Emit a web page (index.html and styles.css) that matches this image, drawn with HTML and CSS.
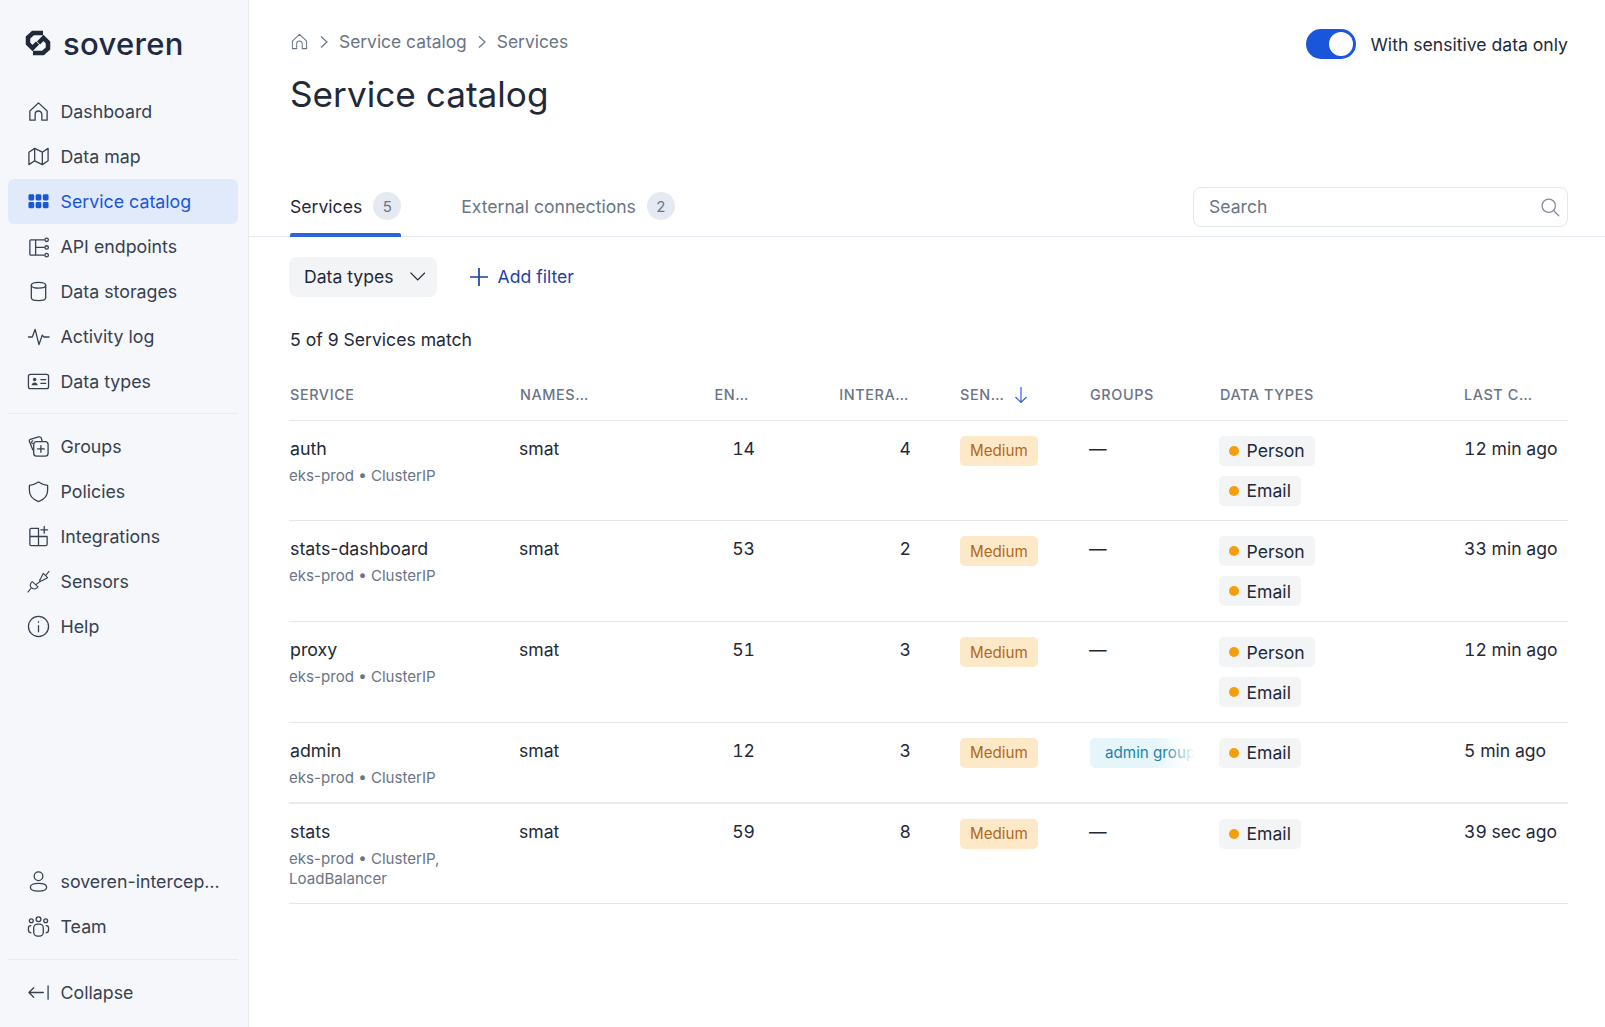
FILE: index.html
```html
<!DOCTYPE html>
<html lang="en">
<head>
<meta charset="utf-8">
<title>Service catalog</title>
<link rel="stylesheet" href="styles.css">
</head>
<body>
<div class="app">
  <aside class="sidebar">
    <div class="logo">
      <svg class="logo-mark" viewBox="0 0 26 26" width="26" height="26"><path d="M18 3H8L3 7.500V13.500L7.500 18 12.500 13" /><path d="M8 23H18L23 18.500V12.500L18.500 8 13.500 13"/></svg>
      <span class="logo-text">soveren</span>
    </div>
    <nav class="nav-group">
      <a class="nav-item"><svg class="ico" viewBox="0 0 24 24"><path d="M3 11.500 12 3l9 8.500V21h-5.500v-6a3.500 3.500 0 0 0-7 0v6H3z"/></svg>Dashboard</a>
      <a class="nav-item"><svg class="ico" viewBox="0 0 24 24"><path d="M2 7.500 8 3.500l8 4 6-4v13l-6 4-8-4-6 4zM8 3.500v13M16 7.500v13"/></svg>Data map</a>
      <a class="nav-item active"><svg class="ico ico-fill" viewBox="0 0 24 24"><rect x="1.500" y="4.500" width="6" height="6.500" rx="1.500"/><rect x="9" y="4.500" width="6" height="6.500" rx="1.500"/><rect x="16.500" y="4.500" width="6" height="6.500" rx="1.500"/><rect x="1.500" y="12.500" width="6" height="6.500" rx="1.500"/><rect x="9" y="12.500" width="6" height="6.500" rx="1.500"/><rect x="16.500" y="12.500" width="6" height="6.500" rx="1.500"/></svg>Service catalog</a>
      <a class="nav-item"><svg class="ico" viewBox="0 0 24 24"><path d="M18 5H4a1 1 0 0 0-1 1V20a1 1 0 0 0 1 1h14M9 5V21M9 13h9"/><circle cx="20.500" cy="5" r="1.800"/><circle cx="20.500" cy="13" r="1.800"/><circle cx="20.500" cy="21" r="1.800"/></svg>API endpoints</a>
      <a class="nav-item"><svg class="ico" viewBox="0 0 24 24"><ellipse cx="12" cy="5.500" rx="7.500" ry="3"/><path d="M4.500 5.500v13c0 1.700 3.400 3 7.500 3s7.500-1.300 7.500-3v-13"/></svg>Data storages</a>
      <a class="nav-item"><svg class="ico" viewBox="0 0 24 24"><path d="M1.500 12.500h4l3-8 4 16 3.500-10 1.500 2h5.500"/></svg>Activity log</a>
      <a class="nav-item"><svg class="ico" viewBox="0 0 24 24"><rect x="1.500" y="4.500" width="21" height="15" rx="2"/><circle cx="8" cy="10" r="1.800" class="dot"/><path d="M4.800 16c.3-2 1.500-3 3.200-3s2.900 1 3.200 3z" class="dot"/><path d="M14.500 10h5M14.500 14h5"/></svg>Data types</a>
    </nav>
    <div class="rule"></div>
    <nav class="nav-group">
      <a class="nav-item"><svg class="ico" viewBox="0 0 24 24"><path d="M6 15.500 2.500 6.500a1.500 1.500 0 0 1 1-2L12 2c1.500-.4 2.500.3 3 1.500l.7 2.500"/><path d="M5.500 9 5 8a1.500 1.500 0 0 1 1-2"/><rect x="7" y="7" width="15" height="15" rx="3"/><path d="M14.500 11v7M11 14.500h7"/></svg>Groups</a>
      <a class="nav-item"><svg class="ico" viewBox="0 0 24 24"><path d="M12 2c3 2 6 3 9.500 3.500V11c0 5.500-4 9.500-9.500 11.500C6.500 20.500 2.500 16.500 2.500 11V5.500C6 5 9 4 12 2z"/></svg>Policies</a>
      <a class="nav-item"><svg class="ico" viewBox="0 0 24 24"><path d="M3 12V5a1.500 1.500 0 0 1 1.500-1.500H12V12M3 12v8a1.500 1.500 0 0 0 1.500 1.500h15a1.500 1.500 0 0 0 1.500-1.500v-8H3M12 12v9.500M18 1.500v7M14.500 5h7"/></svg>Integrations</a>
      <a class="nav-item"><svg class="ico ico-thin" viewBox="0 0 24 24"><path d="M1 23l3.500-4.500M4.500 18.500a4.200 4.200 0 0 1 .2-5.500l.8-.8 6 5.500-.8.800a4.200 4.200 0 0 1-6.200 0zM9.500 15l5-3.500M13.500 10.500 17 3.500l4.500 4.500-6.500 3.500a1.500 1.500 0 0 1-2-1zM20 5l3-3.500"/></svg>Sensors</a>
      <a class="nav-item"><svg class="ico" viewBox="0 0 24 24"><circle cx="12" cy="12" r="10.500"/><path d="M12 11v6.500M12 7v.5"/></svg>Help</a>
    </nav>
    <div class="spacer"></div>
    <nav class="nav-group nav-lower">
      <a class="nav-item"><svg class="ico" viewBox="0 0 24 24"><circle cx="12" cy="6.500" r="4.500"/><path d="M12 14c-5 0-8.500 1.500-8.500 4s3.500 4 8.500 4 8.500-1.500 8.500-4-3.500-4-8.500-4z"/></svg>soveren-intercep…</a>
      <a class="nav-item"><svg class="ico" viewBox="0 0 24 24"><circle cx="12" cy="4.500" r="2.500"/><circle cx="4.500" cy="6" r="2"/><circle cx="19.500" cy="6" r="2"/><rect x="7" y="9.500" width="10" height="12.500" rx="4"/><path d="M4 11c-2 0-2.500 1-2.500 2.500v2c0 1.500.5 3 2.500 3M20 11c2 0 2.500 1 2.500 2.500v2c0 1.500-.5 3-2.500 3"/></svg>Team</a>
    </nav>
    <div class="rule"></div>
    <nav class="nav-group nav-last">
      <a class="nav-item"><svg class="ico" viewBox="0 0 24 24"><path d="M17 12H2M7 7l-5 5 5 5M22 5v14"/></svg>Collapse</a>
    </nav>
  </aside>

  <main class="main">
    <header class="page-head">
      <div>
        <div class="crumbs">
          <svg class="crumb-home" viewBox="0 0 24 24"><path d="M3 11.500 12 3l9 8.500V21h-5.500v-6a3.500 3.500 0 0 0-7 0v6H3z"/></svg>
          <svg class="crumb-sep" viewBox="0 0 10 14"><path d="m2 1.500 6 5.500-6 5.500"/></svg>
          <span>Service catalog</span>
          <svg class="crumb-sep" viewBox="0 0 10 14"><path d="m2 1.500 6 5.500-6 5.500"/></svg>
          <span>Services</span>
        </div>
        <h1 class="title">Service catalog</h1>
      </div>
      <div class="switch-wrap">
        <span class="switch"><span class="knob"></span></span>
        <span class="switch-label">With sensitive data only</span>
      </div>
    </header>

    <div class="tabbar">
      <a class="tab tab-on">Services <span class="count">5</span></a>
      <a class="tab">External connections <span class="count">2</span></a>
      <div class="search">
        <span>Search</span>
        <svg class="search-ico" viewBox="0 0 24 24"><circle cx="10.500" cy="10.500" r="8"/><path d="m16.500 16.500 6 6"/></svg>
      </div>
    </div>

    <div class="filters">
      <button class="select">Data types <svg class="chev" viewBox="0 0 16 9"><path d="m.5.500 7.500 7.500 7.500-7.500"/></svg></button>
      <button class="add"><svg class="plus" viewBox="0 0 20 20"><path d="M10 1v18M1 10h18"/></svg>Add filter</button>
    </div>

    <p class="match">5 of 9 Services match</p>

    <table class="grid">
      <colgroup>
        <col class="c-service"><col class="c-ns"><col class="c-en"><col class="c-int"><col class="c-sen"><col class="c-grp"><col class="c-dt"><col class="c-last">
      </colgroup>
      <thead>
        <tr>
          <th>SERVICE</th>
          <th>NAMES…</th>
          <th class="num th-en">EN…</th>
          <th class="num th-int">INTERA…</th>
          <th class="th-sen">SEN… <svg class="sort" viewBox="0 0 14 18"><path d="M7 1v15.500M1.500 11 7 16.500l5.500-5.500"/></svg></th>
          <th>GROUPS</th>
          <th>DATA TYPES</th>
          <th class="th-last">LAST C…</th>
        </tr>
      </thead>
      <tbody>
        <tr>
          <td><div class="name">auth</div><div class="sub">eks-prod • ClusterIP</div></td>
          <td class="plain">smat</td><td class="plain num">14</td><td class="plain num int">4</td>
          <td><span class="badge">Medium</span></td>
          <td class="plain">—</td>
          <td><span class="chip"><i></i>Person</span><span class="chip"><i></i>Email</span></td>
          <td class="plain last">12 min ago</td>
        </tr>
        <tr>
          <td><div class="name">stats-dashboard</div><div class="sub">eks-prod • ClusterIP</div></td>
          <td class="plain">smat</td><td class="plain num">53</td><td class="plain num int">2</td>
          <td><span class="badge">Medium</span></td>
          <td class="plain">—</td>
          <td><span class="chip"><i></i>Person</span><span class="chip"><i></i>Email</span></td>
          <td class="plain last">33 min ago</td>
        </tr>
        <tr>
          <td><div class="name">proxy</div><div class="sub">eks-prod • ClusterIP</div></td>
          <td class="plain">smat</td><td class="plain num">51</td><td class="plain num int">3</td>
          <td><span class="badge">Medium</span></td>
          <td class="plain">—</td>
          <td><span class="chip"><i></i>Person</span><span class="chip"><i></i>Email</span></td>
          <td class="plain last">12 min ago</td>
        </tr>
        <tr class="row-admin">
          <td><div class="name">admin</div><div class="sub">eks-prod • ClusterIP</div></td>
          <td class="plain">smat</td><td class="plain num">12</td><td class="plain num int">3</td>
          <td><span class="badge">Medium</span></td>
          <td><span class="group">admin group</span></td>
          <td><span class="chip"><i></i>Email</span></td>
          <td class="plain last">5 min ago</td>
        </tr>
        <tr class="row-final">
          <td><div class="name">stats</div><div class="sub">eks-prod • ClusterIP, LoadBalancer</div></td>
          <td class="plain">smat</td><td class="plain num">59</td><td class="plain num int">8</td>
          <td><span class="badge">Medium</span></td>
          <td class="plain">—</td>
          <td><span class="chip"><i></i>Email</span></td>
          <td class="plain last">39 sec ago</td>
        </tr>
      </tbody>
    </table>
  </main>
</div>
</body>
</html>
```
FILE: styles.css
```css
* { box-sizing: border-box; }
html, body { margin: 0; }
body { font-family: Inter, "Liberation Sans", sans-serif; color: #1f2937; background: #fff; font-size: 17.6px; overflow: hidden; }
.app { display: flex; height: 1027px; overflow: hidden; }

.sidebar { width: 249px; flex: none; background: #f5f7fa; border-right: 1px solid #e8ecf2; display: flex; flex-direction: column; padding: 0 10px 0 8px; }
.logo { display: flex; align-items: center; gap: 12px; height: 89px; padding: 0 0 3px 17px; }
.logo-mark { flex: none; fill: none; stroke: #1f2937; stroke-width: 4.500; stroke-linejoin: miter; }
.logo-text { font-size: 31px; font-weight: 500; line-height: 1; letter-spacing: .3px; color: #1f2a44; }
.nav-group { display: flex; flex-direction: column; }
.nav-lower { padding-bottom: 1px; }
.nav-item { display: flex; align-items: center; height: 45px; border-radius: 6px; padding-left: 19px; gap: 10.500px; font-size: 17.800px; color: #374151; white-space: nowrap; }
.nav-item.active { background: #e1eafb; color: #1a56db; }
.ico { width: 23px; height: 23px; flex: none; fill: none; stroke: #374151; stroke-width: 1.350; stroke-linejoin: round; stroke-linecap: round; }
.ico .dot { fill: #374151; stroke: none; }
.ico-thin { stroke-width: 1.150; }
.ico-fill { fill: #1a56db; stroke: none; }
.rule { height: 1px; background: #e8ecf2; margin: 9px 0 10px; }
.spacer { flex: 1; }
.nav-last { padding-bottom: 12px; }

.main { flex: 1; min-width: 0; }
.page-head { display: flex; justify-content: space-between; align-items: flex-start; padding: 30px 37px 0 41px; height: 187px; }
.crumbs { display: flex; align-items: center; height: 23px; font-size: 17.400px; color: #697586; gap: 10px; }
.crumb-home { width: 19px; height: 19px; fill: none; stroke: #697586; stroke-width: 1.300; stroke-linejoin: round; }
.crumb-sep { width: 10px; height: 14px; fill: none; stroke: #697586; stroke-width: 1.200; }
.title { margin: 19px 0 0; font-size: 35.2px; font-weight: 400; line-height: 44px; color: #1f2937; }
.switch-wrap { display: flex; align-items: center; gap: 15px; margin-top: -1px; }
.switch { width: 50px; height: 30px; background: #1a56db; border-radius: 15px; display: flex; align-items: center; justify-content: flex-end; padding: 3px 3px; box-shadow: 0 6px 10px rgba(26,86,219,.03); }
.knob { width: 24px; height: 24px; background: #fff; border-radius: 50%; }

.tabbar { display: flex; align-items: stretch; height: 50px; padding: 0 37px 0 41px; border-bottom: 1px solid #e5eaf1; }
.tab { display: flex; align-items: center; gap: 11px; height: 49px; color: #697586; margin-right: 60px; position: relative; padding-bottom: 11px; }
.tab-on { color: #1f2937; }
.tab-on::after { content: ""; position: absolute; left: 0; right: 0; bottom: -1px; height: 4px; background: #2c63dc; border-radius: 2px 2px 0 0; }
.count { width: 28px; height: 28px; border-radius: 50%; background: #e5eaf2; color: #697586; font-size: 15px; display: flex; align-items: center; justify-content: center; }
.search { margin-left: auto; width: 375px; height: 40px; border: 1px solid #e5e7eb; border-radius: 8px; padding: 0 7px 2px 15px; display: flex; align-items: center; justify-content: space-between; color: #697586; }
.search-ico { width: 20px; height: 20px; fill: none; stroke: #818a99; stroke-width: 1.500; stroke-linecap: round; margin-top: 1px; }

.filters { display: flex; align-items: center; gap: 32px; padding: 20px 41px 0 40px; }
.select { font: inherit; display: flex; align-items: center; gap: 16px; width: 148px; height: 40px; background: #f3f4f6; border: 0; border-radius: 8px; padding: 0 12px 2px 15px; color: #1f2937; white-space: nowrap; }
.chev { width: 16px; height: 9px; fill: none; stroke: #1f2937; stroke-width: 1.300; }
.add { font: inherit; display: flex; align-items: center; gap: 8.500px; background: none; border: 0; padding: 0 0 1px; color: #1e429f; }
.plus { width: 20px; height: 20px; fill: none; stroke: #1e429f; stroke-width: 1.700; }

.match { margin: 32px 41px 0; line-height: 22px; color: #1f2937; }

.grid { margin: 22px 37px 0 40px; width: 1279px; border-collapse: collapse; table-layout: fixed; }
.c-service { width: 230px; } .c-ns { width: 171px; } .c-en { width: 65px; } .c-int { width: 205px; }
.c-sen { width: 129px; } .c-grp { width: 130px; } .c-dt { width: 245px; } .c-last { width: 104px; }
th { font-size: 14.4px; font-weight: 500; letter-spacing: .6px; color: #697586; text-align: left; height: 47px; padding: 0 0 3px 1px; border-bottom: 1px solid #e5e7eb; white-space: nowrap; }
th.num { text-align: right; }
.th-en { padding-right: 6px; }
.th-int { padding-right: 51px; }
.th-sen { padding-left: 0; }
.th-last { padding-left: 0; }
.sort { width: 14px; height: 18px; fill: none; stroke: #2c63dc; stroke-width: 1.200; vertical-align: -4px; margin-left: 5px; }
td { vertical-align: top; padding: 15.200px 0 14.500px; border-bottom: 1px solid #e5e7eb; }
.row-admin td { border-bottom: 2px solid #e8ecf1; padding-bottom: 13.800px; }
.row-final td { padding-bottom: 14.300px; }
.plain { padding-top: 16.200px; line-height: 24px; font-variant-numeric: tabular-nums; }
td.num { text-align: right; }
td.int { padding-right: 49px; }
td.last { padding-left: 0; }
.name { font-size: 17.800px; line-height: 24px; padding-left: 1px; margin-top: 1px; }
.sub { font-size: 15.100px; line-height: 20px; color: #697586; margin-top: 5px; width: 160px; }
.badge { display: inline-flex; align-items: center; height: 30px; padding: 0 10px; border-radius: 5px; background: #fde8c8; color: #b16a1b; font-size: 15.200px; }
.chip { display: flex; width: fit-content; align-items: center; height: 30px; padding: 0 10px; margin-bottom: 10px; border-radius: 5px; background: #f3f4f6; color: #1f2937; }
.chip:last-child { margin-bottom: 0; }
.chip i { width: 10px; height: 10px; border-radius: 50%; background: #f59e0b; margin-right: 7.500px; }
.group { display: block; width: 105px; height: 30px; line-height: 30px; padding-left: 15px; margin-left: 1px; border-radius: 5px 0 0 5px; white-space: nowrap; overflow: hidden; font-size: 15.200px; color: #1c84a8; background: linear-gradient(90deg, #e6f5fa 60%, #fff 100%); position: relative; }
.group::after { content: ""; position: absolute; top: 0; right: 0; bottom: 0; width: 30px; background: linear-gradient(90deg, rgba(255,255,255,0), #fff); }
```
